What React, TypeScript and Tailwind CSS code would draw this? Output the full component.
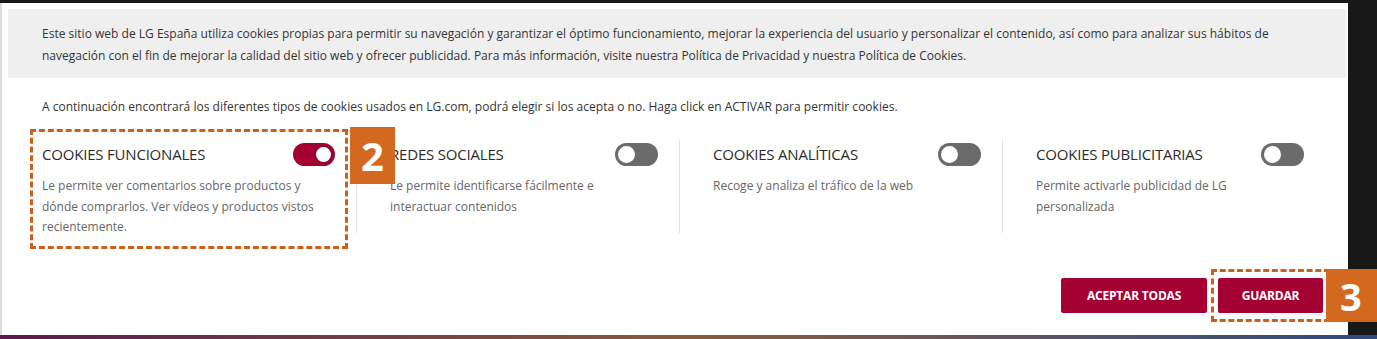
import React from "react";

const font = { fontFamily: '"Open Sans", "Noto Sans", sans-serif' } as const;

function Toggle({ on }: { on?: boolean }) {
  return on ? (
    <div className="w-[42px] h-[23px] rounded-full bg-[#a50034] flex items-center justify-end pr-[2px] shrink-0">
      <div className="w-[19px] h-[19px] rounded-full bg-white border-2 border-[#8a0a2e]" />
    </div>
  ) : (
    <div className="w-[43px] h-[23px] rounded-full bg-[#6b6b6b] flex items-center justify-start pl-[1px] shrink-0">
      <div className="w-[21px] h-[21px] rounded-full bg-white border-2 border-[#6b6b6b]" />
    </div>
  );
}

function Col({
  title,
  desc,
  on,
  first,
}: {
  title: string;
  desc: string;
  on?: boolean;
  first?: boolean;
}) {
  return (
    <div
      className={
        first
          ? "w-[314px] pr-[21px] pt-[4px] h-[94px]"
          : "w-[323px] pl-[33px] pr-[21px] pt-[4px] h-[94px] border-l border-[#e2e2e2]"
      }
    >
      <div className="flex items-center justify-between h-[23px]">
        <span className="text-[15px] text-[#2b2b2b] tracking-[-0.2px]">{title}</span>
        <Toggle on={on} />
      </div>
      <p
        className={
          first
            ? "mt-[10px] w-[285px] text-[12px] leading-[20.5px] text-[#666]"
            : "mt-[10px] w-[250px] text-[12px] leading-[20.5px] text-[#666]"
        }
      >
        {desc}
      </p>
    </div>
  );
}

export default function App() {
  return (
    <div className="w-[1377px] h-[339px] bg-[#181818] relative overflow-hidden" style={font}>
      <div className="absolute left-0 bottom-0 w-full h-[4px] bg-gradient-to-r from-[#5a1a4a] via-[#8a5a3a] to-[#2a4a80]" />
      <div className="w-[1348px] h-[335px] mt-[3px] bg-white border-l-2 border-[#dcdcdc] pt-[6px] pl-[6px] pr-[2px]">
        <div className="bg-[#efefef] h-[69px] pl-[34px] pt-[14px]">
          <p className="text-[12px] leading-[22px] text-[#333] tracking-[0.01px]">
            Este sitio web de LG España utiliza cookies propias para permitir su navegación y garantizar el óptimo funcionamiento, mejorar la experiencia del usuario y personalizar el contenido, así como para analizar sus hábitos de
            <br />
            navegación con el fin de mejorar la calidad del sitio web y ofrecer publicidad. Para más información, visite nuestra Política de Privacidad y nuestra Política de Cookies.
          </p>
        </div>
        <div className="pl-[34px] pt-[18px]">
          <p className="text-[12px] leading-[22px] text-[#333] tracking-[0.01px]">
            A continuación encontrará los diferentes tipos de cookies usados en LG.com, podrá elegir si los acepta o no. Haga click en ACTIVAR para permitir cookies.
          </p>
          <div className="flex mt-[21px] relative">
            <Col
              first
              on
              title="COOKIES FUNCIONALES"
              desc="Le permite ver comentarios sobre productos y dónde comprarlos. Ver vídeos y productos vistos recientemente."
            />
            <Col
              title="REDES SOCIALES"
              desc="Le permite identificarse fácilmente e interactuar contenidos"
            />
            <Col title="COOKIES ANALÍTICAS" desc="Recoge y analiza el tráfico de la web" />
            <Col
              title="COOKIES PUBLICITARIAS"
              desc="Permite activarle publicidad de LG personalizada"
            />
            <div className="absolute left-[-12px] top-[-10px] w-[318px] h-[120px] border-[3px] border-dashed border-[#c9601c]" />
            <div className="absolute left-[308px] top-[-12px] w-[45px] h-[57px] bg-[#d2691e] flex items-center justify-center text-white text-[40px] font-bold leading-none">
              2
            </div>
          </div>
          <div className="flex justify-end gap-[11px] mt-[45px] pr-[23px] relative">
            <button className="h-[35px] w-[146px] bg-[#a50034] text-white text-[12px] font-bold rounded-[2px] tracking-[-0.2px]">
              ACEPTAR TODAS
            </button>
            <button className="h-[35px] w-[105px] bg-[#a50034] text-white text-[12px] font-bold rounded-[2px] tracking-[-0.2px]">
              GUARDAR
            </button>
            <div className="absolute right-[16px] top-[-9px] w-[119px] h-[53px] border-[3px] border-dashed border-[#c9601c]" />
            <div className="absolute right-[-40px] top-[-9px] w-[60px] h-[53px] bg-[#d2691e] flex items-center justify-start pl-[14px] text-white text-[38px] font-bold leading-none">
              3
            </div>
          </div>
        </div>
      </div>
    </div>
  );
}
